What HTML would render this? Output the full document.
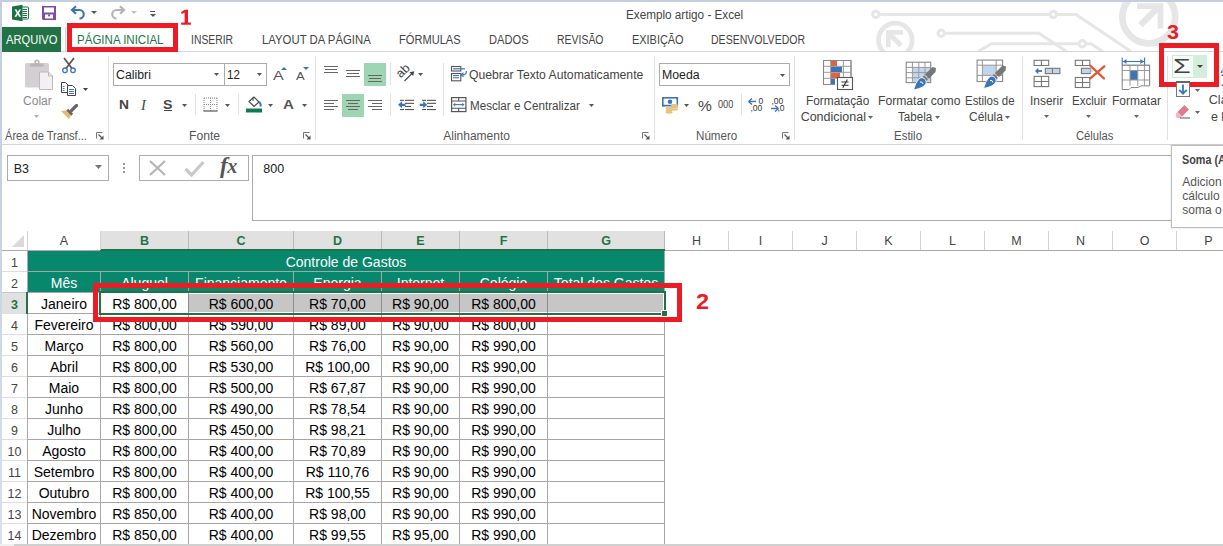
<!DOCTYPE html>
<html><head><meta charset="utf-8"><style>
html,body{margin:0;padding:0;}
body{width:1223px;height:546px;overflow:hidden;position:relative;background:#fff;font-family:"Liberation Sans", sans-serif;}
</style></head><body>
<div style="position:absolute;left:101px;top:231px;width:563px;height:18px;background:#e1e1e1;"></div>
<div style="position:absolute;left:100px;top:249px;width:565px;height:2px;background:#217346;"></div>
<div style="position:absolute;left:2px;top:250px;width:98px;height:1px;background:#ababab;"></div>
<div style="position:absolute;left:665px;top:250px;width:558px;height:1px;background:#ababab;"></div>
<div style="position:absolute;left:27px;top:231px;width:1px;height:19px;background:#d4d4d4;"></div>
<div style="position:absolute;left:100px;top:231px;width:1px;height:19px;background:#d4d4d4;"></div>
<div style="position:absolute;left:188px;top:231px;width:1px;height:18px;background:#b8b8b8;"></div>
<div style="position:absolute;left:293px;top:231px;width:1px;height:18px;background:#b8b8b8;"></div>
<div style="position:absolute;left:381px;top:231px;width:1px;height:18px;background:#b8b8b8;"></div>
<div style="position:absolute;left:459px;top:231px;width:1px;height:18px;background:#b8b8b8;"></div>
<div style="position:absolute;left:547px;top:231px;width:1px;height:18px;background:#b8b8b8;"></div>
<div style="position:absolute;left:664px;top:231px;width:1px;height:18px;background:#b8b8b8;"></div>
<div style="position:absolute;left:728px;top:231px;width:1px;height:19px;background:#d4d4d4;"></div>
<div style="position:absolute;left:792px;top:231px;width:1px;height:19px;background:#d4d4d4;"></div>
<div style="position:absolute;left:856px;top:231px;width:1px;height:19px;background:#d4d4d4;"></div>
<div style="position:absolute;left:920px;top:231px;width:1px;height:19px;background:#d4d4d4;"></div>
<div style="position:absolute;left:984px;top:231px;width:1px;height:19px;background:#d4d4d4;"></div>
<div style="position:absolute;left:1048px;top:231px;width:1px;height:19px;background:#d4d4d4;"></div>
<div style="position:absolute;left:1112px;top:231px;width:1px;height:19px;background:#d4d4d4;"></div>
<div style="position:absolute;left:1176px;top:231px;width:1px;height:19px;background:#d4d4d4;"></div>
<div style="position:absolute;left:1240px;top:231px;width:1px;height:19px;background:#d4d4d4;"></div>
<svg style="position:absolute;left:12px;top:235px;" width="13" height="12" viewBox="0 0 13 12"><path d="M12 0V12H0Z" fill="#dadada"/></svg>
<div style="position:absolute;left:59.83px;top:235px;font-size:12.5px;line-height:12.5px;color:#444;font-weight:400;white-space:pre;">A</div>
<div style="position:absolute;left:139.98px;top:235px;font-size:12.5px;line-height:12.5px;color:#217346;font-weight:700;white-space:pre;">B</div>
<div style="position:absolute;left:236.48px;top:235px;font-size:12.5px;line-height:12.5px;color:#217346;font-weight:700;white-space:pre;">C</div>
<div style="position:absolute;left:332.98px;top:235px;font-size:12.5px;line-height:12.5px;color:#217346;font-weight:700;white-space:pre;">D</div>
<div style="position:absolute;left:416.33px;top:235px;font-size:12.5px;line-height:12.5px;color:#217346;font-weight:700;white-space:pre;">E</div>
<div style="position:absolute;left:499.68px;top:235px;font-size:12.5px;line-height:12.5px;color:#217346;font-weight:700;white-space:pre;">F</div>
<div style="position:absolute;left:601.13px;top:235px;font-size:12.5px;line-height:12.5px;color:#217346;font-weight:700;white-space:pre;">G</div>
<div style="position:absolute;left:691.98px;top:235px;font-size:12.5px;line-height:12.5px;color:#444;font-weight:400;white-space:pre;">H</div>
<div style="position:absolute;left:758.76px;top:235px;font-size:12.5px;line-height:12.5px;color:#444;font-weight:400;white-space:pre;">I</div>
<div style="position:absolute;left:821.38px;top:235px;font-size:12.5px;line-height:12.5px;color:#444;font-weight:400;white-space:pre;">J</div>
<div style="position:absolute;left:884.33px;top:235px;font-size:12.5px;line-height:12.5px;color:#444;font-weight:400;white-space:pre;">K</div>
<div style="position:absolute;left:949.02px;top:235px;font-size:12.5px;line-height:12.5px;color:#444;font-weight:400;white-space:pre;">L</div>
<div style="position:absolute;left:1011.29px;top:235px;font-size:12.5px;line-height:12.5px;color:#444;font-weight:400;white-space:pre;">M</div>
<div style="position:absolute;left:1075.98px;top:235px;font-size:12.5px;line-height:12.5px;color:#444;font-weight:400;white-space:pre;">N</div>
<div style="position:absolute;left:1139.63px;top:235px;font-size:12.5px;line-height:12.5px;color:#444;font-weight:400;white-space:pre;">O</div>
<div style="position:absolute;left:1204.33px;top:235px;font-size:12.5px;line-height:12.5px;color:#444;font-weight:400;white-space:pre;">P</div>
<div style="position:absolute;left:27px;top:251px;width:1px;height:295px;background:#ababab;"></div>
<div style="position:absolute;left:2px;top:271px;width:25px;height:1px;background:#dedede;"></div>
<div style="position:absolute;left:2px;top:292px;width:25px;height:1px;background:#dedede;"></div>
<div style="position:absolute;left:2px;top:313px;width:25px;height:1px;background:#dedede;"></div>
<div style="position:absolute;left:2px;top:334px;width:25px;height:1px;background:#dedede;"></div>
<div style="position:absolute;left:2px;top:355px;width:25px;height:1px;background:#dedede;"></div>
<div style="position:absolute;left:2px;top:376px;width:25px;height:1px;background:#dedede;"></div>
<div style="position:absolute;left:2px;top:397px;width:25px;height:1px;background:#dedede;"></div>
<div style="position:absolute;left:2px;top:418px;width:25px;height:1px;background:#dedede;"></div>
<div style="position:absolute;left:2px;top:439px;width:25px;height:1px;background:#dedede;"></div>
<div style="position:absolute;left:2px;top:460px;width:25px;height:1px;background:#dedede;"></div>
<div style="position:absolute;left:2px;top:481px;width:25px;height:1px;background:#dedede;"></div>
<div style="position:absolute;left:2px;top:502px;width:25px;height:1px;background:#dedede;"></div>
<div style="position:absolute;left:2px;top:523px;width:25px;height:1px;background:#dedede;"></div>
<div style="position:absolute;left:2px;top:293px;width:24px;height:20px;background:#e1e1e1;"></div>
<div style="position:absolute;left:2px;top:292px;width:25px;height:1px;background:#c8c8c8;"></div>
<div style="position:absolute;left:26px;top:292px;width:2px;height:22px;background:#217346;"></div>
<div style="position:absolute;left:11.02px;top:257px;font-size:12.5px;line-height:12.5px;color:#444;font-weight:400;white-space:pre;">1</div>
<div style="position:absolute;left:11.02px;top:278px;font-size:12.5px;line-height:12.5px;color:#444;font-weight:400;white-space:pre;">2</div>
<div style="position:absolute;left:11.02px;top:299px;font-size:12.5px;line-height:12.5px;color:#217346;font-weight:700;white-space:pre;">3</div>
<div style="position:absolute;left:11.02px;top:320px;font-size:12.5px;line-height:12.5px;color:#444;font-weight:400;white-space:pre;">4</div>
<div style="position:absolute;left:11.02px;top:341px;font-size:12.5px;line-height:12.5px;color:#444;font-weight:400;white-space:pre;">5</div>
<div style="position:absolute;left:11.02px;top:362px;font-size:12.5px;line-height:12.5px;color:#444;font-weight:400;white-space:pre;">6</div>
<div style="position:absolute;left:11.02px;top:383px;font-size:12.5px;line-height:12.5px;color:#444;font-weight:400;white-space:pre;">7</div>
<div style="position:absolute;left:11.02px;top:404px;font-size:12.5px;line-height:12.5px;color:#444;font-weight:400;white-space:pre;">8</div>
<div style="position:absolute;left:11.02px;top:425px;font-size:12.5px;line-height:12.5px;color:#444;font-weight:400;white-space:pre;">9</div>
<div style="position:absolute;left:7.55px;top:446px;font-size:12.5px;line-height:12.5px;color:#444;font-weight:400;white-space:pre;">10</div>
<div style="position:absolute;left:8.01px;top:467px;font-size:12.5px;line-height:12.5px;color:#444;font-weight:400;white-space:pre;">11</div>
<div style="position:absolute;left:7.55px;top:488px;font-size:12.5px;line-height:12.5px;color:#444;font-weight:400;white-space:pre;">12</div>
<div style="position:absolute;left:7.55px;top:509px;font-size:12.5px;line-height:12.5px;color:#444;font-weight:400;white-space:pre;">13</div>
<div style="position:absolute;left:7.55px;top:530px;font-size:12.5px;line-height:12.5px;color:#444;font-weight:400;white-space:pre;">14</div>
<div style="position:absolute;left:28px;top:251px;width:636px;height:41px;background:#07876b;"></div>
<div style="position:absolute;left:189px;top:294px;width:474px;height:18px;background:#c6c6c6;"></div>
<div style="position:absolute;left:28px;top:271px;width:637px;height:1px;background:#a9a5a5;"></div>
<div style="position:absolute;left:28px;top:292px;width:637px;height:1px;background:#a9a5a5;"></div>
<div style="position:absolute;left:28px;top:313px;width:637px;height:1px;background:#a9a5a5;"></div>
<div style="position:absolute;left:28px;top:334px;width:637px;height:1px;background:#a9a5a5;"></div>
<div style="position:absolute;left:28px;top:355px;width:637px;height:1px;background:#a9a5a5;"></div>
<div style="position:absolute;left:28px;top:376px;width:637px;height:1px;background:#a9a5a5;"></div>
<div style="position:absolute;left:28px;top:397px;width:637px;height:1px;background:#a9a5a5;"></div>
<div style="position:absolute;left:28px;top:418px;width:637px;height:1px;background:#a9a5a5;"></div>
<div style="position:absolute;left:28px;top:439px;width:637px;height:1px;background:#a9a5a5;"></div>
<div style="position:absolute;left:28px;top:460px;width:637px;height:1px;background:#a9a5a5;"></div>
<div style="position:absolute;left:28px;top:481px;width:637px;height:1px;background:#a9a5a5;"></div>
<div style="position:absolute;left:28px;top:502px;width:637px;height:1px;background:#a9a5a5;"></div>
<div style="position:absolute;left:28px;top:523px;width:637px;height:1px;background:#a9a5a5;"></div>
<div style="position:absolute;left:100px;top:272px;width:1px;height:274px;background:#a9a5a5;"></div>
<div style="position:absolute;left:188px;top:272px;width:1px;height:274px;background:#a9a5a5;"></div>
<div style="position:absolute;left:293px;top:272px;width:1px;height:274px;background:#a9a5a5;"></div>
<div style="position:absolute;left:381px;top:272px;width:1px;height:274px;background:#a9a5a5;"></div>
<div style="position:absolute;left:459px;top:272px;width:1px;height:274px;background:#a9a5a5;"></div>
<div style="position:absolute;left:547px;top:272px;width:1px;height:274px;background:#a9a5a5;"></div>
<div style="position:absolute;left:664px;top:272px;width:1px;height:274px;background:#a9a5a5;"></div>
<div style="position:absolute;left:664px;top:251px;width:1px;height:295px;background:#a9a5a5;"></div>
<div style="position:absolute;left:285.69px;top:255px;font-size:14px;line-height:14px;color:#fff;font-weight:400;white-space:pre;">Controle de Gastos</div>
<div style="position:absolute;left:50.77px;top:276px;font-size:14px;line-height:14px;color:#fff;font-weight:400;white-space:pre;">Mês</div>
<div style="position:absolute;left:121.15px;top:276px;font-size:14px;line-height:14px;color:#fff;font-weight:400;white-space:pre;">Aluguel</div>
<div style="position:absolute;left:195.09px;top:276px;font-size:14px;line-height:14px;color:#fff;font-weight:400;white-space:pre;">Financiamento</div>
<div style="position:absolute;left:313.37px;top:276px;font-size:14px;line-height:14px;color:#fff;font-weight:400;white-space:pre;">Energia</div>
<div style="position:absolute;left:396.76px;top:276px;font-size:14px;line-height:14px;color:#fff;font-weight:400;white-space:pre;">Internet</div>
<div style="position:absolute;left:479.76px;top:276px;font-size:14px;line-height:14px;color:#fff;font-weight:400;white-space:pre;">Colégio</div>
<div style="position:absolute;left:553.86px;top:276px;font-size:14px;line-height:14px;color:#fff;font-weight:400;white-space:pre;">Total dos Gastos</div>
<div style="position:absolute;left:41.04px;top:297px;font-size:14px;line-height:14px;color:#000;font-weight:400;white-space:pre;">Janeiro</div>
<div style="position:absolute;left:112.20px;top:297px;font-size:14px;line-height:14px;color:#000;font-weight:400;white-space:pre;">R$ 800,00</div>
<div style="position:absolute;left:208.70px;top:297px;font-size:14px;line-height:14px;color:#000;font-weight:400;white-space:pre;">R$ 600,00</div>
<div style="position:absolute;left:309.09px;top:297px;font-size:14px;line-height:14px;color:#000;font-weight:400;white-space:pre;">R$ 70,00</div>
<div style="position:absolute;left:392.09px;top:297px;font-size:14px;line-height:14px;color:#000;font-weight:400;white-space:pre;">R$ 90,00</div>
<div style="position:absolute;left:471.20px;top:297px;font-size:14px;line-height:14px;color:#000;font-weight:400;white-space:pre;">R$ 800,00</div>
<div style="position:absolute;left:34.43px;top:318px;font-size:14px;line-height:14px;color:#000;font-weight:400;white-space:pre;">Fevereiro</div>
<div style="position:absolute;left:112.20px;top:318px;font-size:14px;line-height:14px;color:#000;font-weight:400;white-space:pre;">R$ 800,00</div>
<div style="position:absolute;left:208.70px;top:318px;font-size:14px;line-height:14px;color:#000;font-weight:400;white-space:pre;">R$ 590,00</div>
<div style="position:absolute;left:309.09px;top:318px;font-size:14px;line-height:14px;color:#000;font-weight:400;white-space:pre;">R$ 89,00</div>
<div style="position:absolute;left:392.09px;top:318px;font-size:14px;line-height:14px;color:#000;font-weight:400;white-space:pre;">R$ 90,00</div>
<div style="position:absolute;left:471.20px;top:318px;font-size:14px;line-height:14px;color:#000;font-weight:400;white-space:pre;">R$ 800,00</div>
<div style="position:absolute;left:44.55px;top:339px;font-size:14px;line-height:14px;color:#000;font-weight:400;white-space:pre;">Março</div>
<div style="position:absolute;left:112.20px;top:339px;font-size:14px;line-height:14px;color:#000;font-weight:400;white-space:pre;">R$ 800,00</div>
<div style="position:absolute;left:208.70px;top:339px;font-size:14px;line-height:14px;color:#000;font-weight:400;white-space:pre;">R$ 560,00</div>
<div style="position:absolute;left:309.09px;top:339px;font-size:14px;line-height:14px;color:#000;font-weight:400;white-space:pre;">R$ 76,00</div>
<div style="position:absolute;left:392.09px;top:339px;font-size:14px;line-height:14px;color:#000;font-weight:400;white-space:pre;">R$ 90,00</div>
<div style="position:absolute;left:471.20px;top:339px;font-size:14px;line-height:14px;color:#000;font-weight:400;white-space:pre;">R$ 990,00</div>
<div style="position:absolute;left:49.99px;top:360px;font-size:14px;line-height:14px;color:#000;font-weight:400;white-space:pre;">Abril</div>
<div style="position:absolute;left:112.20px;top:360px;font-size:14px;line-height:14px;color:#000;font-weight:400;white-space:pre;">R$ 800,00</div>
<div style="position:absolute;left:208.70px;top:360px;font-size:14px;line-height:14px;color:#000;font-weight:400;white-space:pre;">R$ 530,00</div>
<div style="position:absolute;left:305.20px;top:360px;font-size:14px;line-height:14px;color:#000;font-weight:400;white-space:pre;">R$ 100,00</div>
<div style="position:absolute;left:392.09px;top:360px;font-size:14px;line-height:14px;color:#000;font-weight:400;white-space:pre;">R$ 90,00</div>
<div style="position:absolute;left:471.20px;top:360px;font-size:14px;line-height:14px;color:#000;font-weight:400;white-space:pre;">R$ 990,00</div>
<div style="position:absolute;left:48.82px;top:381px;font-size:14px;line-height:14px;color:#000;font-weight:400;white-space:pre;">Maio</div>
<div style="position:absolute;left:112.20px;top:381px;font-size:14px;line-height:14px;color:#000;font-weight:400;white-space:pre;">R$ 800,00</div>
<div style="position:absolute;left:208.70px;top:381px;font-size:14px;line-height:14px;color:#000;font-weight:400;white-space:pre;">R$ 500,00</div>
<div style="position:absolute;left:309.09px;top:381px;font-size:14px;line-height:14px;color:#000;font-weight:400;white-space:pre;">R$ 67,87</div>
<div style="position:absolute;left:392.09px;top:381px;font-size:14px;line-height:14px;color:#000;font-weight:400;white-space:pre;">R$ 90,00</div>
<div style="position:absolute;left:471.20px;top:381px;font-size:14px;line-height:14px;color:#000;font-weight:400;white-space:pre;">R$ 990,00</div>
<div style="position:absolute;left:44.92px;top:402px;font-size:14px;line-height:14px;color:#000;font-weight:400;white-space:pre;">Junho</div>
<div style="position:absolute;left:112.20px;top:402px;font-size:14px;line-height:14px;color:#000;font-weight:400;white-space:pre;">R$ 800,00</div>
<div style="position:absolute;left:208.70px;top:402px;font-size:14px;line-height:14px;color:#000;font-weight:400;white-space:pre;">R$ 490,00</div>
<div style="position:absolute;left:309.09px;top:402px;font-size:14px;line-height:14px;color:#000;font-weight:400;white-space:pre;">R$ 78,54</div>
<div style="position:absolute;left:392.09px;top:402px;font-size:14px;line-height:14px;color:#000;font-weight:400;white-space:pre;">R$ 90,00</div>
<div style="position:absolute;left:471.20px;top:402px;font-size:14px;line-height:14px;color:#000;font-weight:400;white-space:pre;">R$ 990,00</div>
<div style="position:absolute;left:47.27px;top:423px;font-size:14px;line-height:14px;color:#000;font-weight:400;white-space:pre;">Julho</div>
<div style="position:absolute;left:112.20px;top:423px;font-size:14px;line-height:14px;color:#000;font-weight:400;white-space:pre;">R$ 800,00</div>
<div style="position:absolute;left:208.70px;top:423px;font-size:14px;line-height:14px;color:#000;font-weight:400;white-space:pre;">R$ 450,00</div>
<div style="position:absolute;left:309.09px;top:423px;font-size:14px;line-height:14px;color:#000;font-weight:400;white-space:pre;">R$ 98,21</div>
<div style="position:absolute;left:392.09px;top:423px;font-size:14px;line-height:14px;color:#000;font-weight:400;white-space:pre;">R$ 90,00</div>
<div style="position:absolute;left:471.20px;top:423px;font-size:14px;line-height:14px;color:#000;font-weight:400;white-space:pre;">R$ 990,00</div>
<div style="position:absolute;left:42.20px;top:444px;font-size:14px;line-height:14px;color:#000;font-weight:400;white-space:pre;">Agosto</div>
<div style="position:absolute;left:112.20px;top:444px;font-size:14px;line-height:14px;color:#000;font-weight:400;white-space:pre;">R$ 800,00</div>
<div style="position:absolute;left:208.70px;top:444px;font-size:14px;line-height:14px;color:#000;font-weight:400;white-space:pre;">R$ 400,00</div>
<div style="position:absolute;left:309.09px;top:444px;font-size:14px;line-height:14px;color:#000;font-weight:400;white-space:pre;">R$ 70,89</div>
<div style="position:absolute;left:392.09px;top:444px;font-size:14px;line-height:14px;color:#000;font-weight:400;white-space:pre;">R$ 90,00</div>
<div style="position:absolute;left:471.20px;top:444px;font-size:14px;line-height:14px;color:#000;font-weight:400;white-space:pre;">R$ 990,00</div>
<div style="position:absolute;left:33.65px;top:465px;font-size:14px;line-height:14px;color:#000;font-weight:400;white-space:pre;">Setembro</div>
<div style="position:absolute;left:112.20px;top:465px;font-size:14px;line-height:14px;color:#000;font-weight:400;white-space:pre;">R$ 800,00</div>
<div style="position:absolute;left:208.70px;top:465px;font-size:14px;line-height:14px;color:#000;font-weight:400;white-space:pre;">R$ 400,00</div>
<div style="position:absolute;left:305.71px;top:465px;font-size:14px;line-height:14px;color:#000;font-weight:400;white-space:pre;">R$ 110,76</div>
<div style="position:absolute;left:392.09px;top:465px;font-size:14px;line-height:14px;color:#000;font-weight:400;white-space:pre;">R$ 90,00</div>
<div style="position:absolute;left:471.20px;top:465px;font-size:14px;line-height:14px;color:#000;font-weight:400;white-space:pre;">R$ 990,00</div>
<div style="position:absolute;left:38.70px;top:486px;font-size:14px;line-height:14px;color:#000;font-weight:400;white-space:pre;">Outubro</div>
<div style="position:absolute;left:112.20px;top:486px;font-size:14px;line-height:14px;color:#000;font-weight:400;white-space:pre;">R$ 800,00</div>
<div style="position:absolute;left:208.70px;top:486px;font-size:14px;line-height:14px;color:#000;font-weight:400;white-space:pre;">R$ 400,00</div>
<div style="position:absolute;left:305.20px;top:486px;font-size:14px;line-height:14px;color:#000;font-weight:400;white-space:pre;">R$ 100,55</div>
<div style="position:absolute;left:392.09px;top:486px;font-size:14px;line-height:14px;color:#000;font-weight:400;white-space:pre;">R$ 90,00</div>
<div style="position:absolute;left:471.20px;top:486px;font-size:14px;line-height:14px;color:#000;font-weight:400;white-space:pre;">R$ 990,00</div>
<div style="position:absolute;left:31.70px;top:507px;font-size:14px;line-height:14px;color:#000;font-weight:400;white-space:pre;">Novembro</div>
<div style="position:absolute;left:112.20px;top:507px;font-size:14px;line-height:14px;color:#000;font-weight:400;white-space:pre;">R$ 850,00</div>
<div style="position:absolute;left:208.70px;top:507px;font-size:14px;line-height:14px;color:#000;font-weight:400;white-space:pre;">R$ 400,00</div>
<div style="position:absolute;left:309.09px;top:507px;font-size:14px;line-height:14px;color:#000;font-weight:400;white-space:pre;">R$ 98,00</div>
<div style="position:absolute;left:392.09px;top:507px;font-size:14px;line-height:14px;color:#000;font-weight:400;white-space:pre;">R$ 90,00</div>
<div style="position:absolute;left:471.20px;top:507px;font-size:14px;line-height:14px;color:#000;font-weight:400;white-space:pre;">R$ 990,00</div>
<div style="position:absolute;left:31.70px;top:528px;font-size:14px;line-height:14px;color:#000;font-weight:400;white-space:pre;">Dezembro</div>
<div style="position:absolute;left:112.20px;top:528px;font-size:14px;line-height:14px;color:#000;font-weight:400;white-space:pre;">R$ 850,00</div>
<div style="position:absolute;left:208.70px;top:528px;font-size:14px;line-height:14px;color:#000;font-weight:400;white-space:pre;">R$ 400,00</div>
<div style="position:absolute;left:309.09px;top:528px;font-size:14px;line-height:14px;color:#000;font-weight:400;white-space:pre;">R$ 99,55</div>
<div style="position:absolute;left:392.09px;top:528px;font-size:14px;line-height:14px;color:#000;font-weight:400;white-space:pre;">R$ 95,00</div>
<div style="position:absolute;left:471.20px;top:528px;font-size:14px;line-height:14px;color:#000;font-weight:400;white-space:pre;">R$ 990,00</div>
<div style="position:absolute;left:188px;top:294px;width:1px;height:18px;background:#8c8c8c;"></div>
<div style="position:absolute;left:293px;top:294px;width:1px;height:18px;background:#8c8c8c;"></div>
<div style="position:absolute;left:381px;top:294px;width:1px;height:18px;background:#8c8c8c;"></div>
<div style="position:absolute;left:459px;top:294px;width:1px;height:18px;background:#8c8c8c;"></div>
<div style="position:absolute;left:547px;top:294px;width:1px;height:18px;background:#8c8c8c;"></div>
<div style="position:absolute;left:99px;top:291px;width:567px;height:24px;box-sizing:border-box;border:2px solid #217346;background:transparent;"></div>
<div style="position:absolute;left:661px;top:310px;width:7px;height:7px;background:#fff;"></div>
<div style="position:absolute;left:662px;top:311px;width:5px;height:5px;background:#217346;"></div>
<div style="position:absolute;left:0px;top:544px;width:14px;height:2px;background:#f0f0f0;"></div>
<div style="position:absolute;left:14px;top:544px;width:1209px;height:2px;background:#d0d0d0;"></div>
<div style="position:absolute;left:2px;top:144px;width:1221px;height:1px;background:#d5d5d5;"></div>
<div style="position:absolute;left:7px;top:155px;width:102px;height:26px;box-sizing:border-box;border:1px solid #ababab;background:#fff;"></div>
<div style="position:absolute;left:13.75px;top:163px;font-size:12.5px;line-height:12.5px;color:#222;font-weight:400;white-space:pre;">B3</div>
<svg style="position:absolute;left:95.0px;top:165px" width="7" height="4" viewBox="0 0 7 4"><path d="M0 0H7L3.5 4Z" fill="#777"/></svg>
<div style="position:absolute;left:123px;top:163px;width:2px;height:2px;background:#999;"></div>
<div style="position:absolute;left:123px;top:167px;width:2px;height:2px;background:#999;"></div>
<div style="position:absolute;left:123px;top:171px;width:2px;height:2px;background:#999;"></div>
<div style="position:absolute;left:139px;top:155px;width:110px;height:26px;box-sizing:border-box;border:1px solid #ababab;background:#fff;"></div>
<svg style="position:absolute;left:148px;top:160px;" width="19" height="17" viewBox="0 0 19 17"><path d="M2 1L17 15M17 1L2 15" stroke="#b5b5b5" stroke-width="2.2" fill="none"/></svg>
<svg style="position:absolute;left:184px;top:160px;" width="21" height="17" viewBox="0 0 21 17"><path d="M1.5 9L7.5 15L19.5 2" stroke="#c8c8c8" stroke-width="3.2" fill="none"/></svg>
<div style="position:absolute;left:220px;top:154px;font-family:'Liberation Serif',serif;font-style:italic;font-weight:700;font-size:23px;line-height:24px;color:#555;letter-spacing:-0.5px">f<span style="font-size:20px">x</span></div>
<div style="position:absolute;left:252px;top:155px;width:971px;height:66px;box-sizing:border-box;border:1px solid #ababab;background:#fff;"></div>
<div style="position:absolute;left:263.25px;top:163px;font-size:12.5px;line-height:12.5px;color:#222;font-weight:400;white-space:pre;">800</div>
<div style="position:absolute;left:1171px;top:145px;width:60px;height:83px;box-sizing:border-box;border:1px solid #bdbdbd;background:#fff;box-shadow:0 0 2px rgba(0,0,0,0.15);"></div>
<div style="position:absolute;left:1182.35px;top:154px;font-size:12px;line-height:12px;color:#444;font-weight:700;white-space:pre;transform:scaleX(0.9000);transform-origin:0 0;">Soma (A</div>
<div style="position:absolute;left:1182.28px;top:176px;font-size:12px;line-height:12px;color:#555;font-weight:400;white-space:pre;">Adicion</div>
<div style="position:absolute;left:1182.28px;top:190px;font-size:12px;line-height:12px;color:#555;font-weight:400;white-space:pre;">cálculo</div>
<div style="position:absolute;left:1182.28px;top:204px;font-size:12px;line-height:12px;color:#555;font-weight:400;white-space:pre;">soma o</div>
<div style="position:absolute;left:0px;top:0px;width:1223px;height:2px;background:#c4cedf;"></div>
<div style="position:absolute;left:0px;top:0px;width:2px;height:544px;background:linear-gradient(#c4cedf, #c8d2e2 40%, #d8e0ec);"></div>
<svg style="position:absolute;left:2px;top:2px;" width="1221" height="49" viewBox="0 0 1221 49"><g transform="translate(-2 -2)" fill="none" stroke="#e6e6e6" stroke-width="3">
<path d="M879 14.4H1050M1056.5 14.4H1076L1131 51.5"/>
<circle cx="875.8" cy="14.4" r="3.2"/>
<circle cx="1053.3" cy="14.4" r="3.2"/>
<path d="M944.5 33.3H1039L1066.5 51.5"/>
<circle cx="941.2" cy="33.3" r="3.2"/>
<path d="M978 51.5L991.5 43.8H1079M1085.7 43.8H1091L1103 51.5"/>
<circle cx="1082.4" cy="43.8" r="3.2"/>
<circle cx="895.3" cy="40" r="16.8" stroke-width="4.7"/>
<path d="M901 45.5L889.5 34" stroke-width="5"/>
<path d="M888.3 47.2V32.4H903" stroke-width="4.6"/>
<circle cx="1148.8" cy="16.9" r="26.4" stroke-width="6.7"/>
<path d="M1140.5 25L1157.5 8" stroke-width="6.5"/>
<path d="M1137 6.1H1160.5V28.6" stroke-width="5.7"/>
</g></svg>
<div style="position:absolute;left:625.60px;top:9px;font-size:12.5px;line-height:12.5px;color:#444;font-weight:400;white-space:pre;transform:scaleX(0.9371);transform-origin:0 0;">Exemplo artigo - Excel</div>
<div style="position:absolute;left:2px;top:27px;width:59px;height:25px;background:#217346;"></div>
<div style="position:absolute;left:6.33px;top:34px;font-size:12.5px;line-height:12.5px;color:#fff;font-weight:400;white-space:pre;transform:scaleX(0.8932);transform-origin:0 0;">ARQUIVO</div>
<div style="position:absolute;left:61px;top:51px;width:1162px;height:1px;background:#d5d5d5;"></div>
<div style="position:absolute;left:65px;top:27px;width:1px;height:25px;background:#d5d5d5;"></div>
<div style="position:absolute;left:77.31px;top:34px;font-size:12.5px;line-height:12.5px;color:#217346;font-weight:400;white-space:pre;transform:scaleX(0.9224);transform-origin:0 0;">PÁGINA INICIAL</div>
<div style="position:absolute;left:191.38px;top:34px;font-size:12.5px;line-height:12.5px;color:#444;font-weight:400;white-space:pre;transform:scaleX(0.8303);transform-origin:0 0;">INSERIR</div>
<div style="position:absolute;left:261.82px;top:34px;font-size:12.5px;line-height:12.5px;color:#444;font-weight:400;white-space:pre;transform:scaleX(0.9080);transform-origin:0 0;">LAYOUT DA PÁGINA</div>
<div style="position:absolute;left:398.73px;top:34px;font-size:12.5px;line-height:12.5px;color:#444;font-weight:400;white-space:pre;transform:scaleX(0.8869);transform-origin:0 0;">FÓRMULAS</div>
<div style="position:absolute;left:489.03px;top:34px;font-size:12.5px;line-height:12.5px;color:#444;font-weight:400;white-space:pre;transform:scaleX(0.8908);transform-origin:0 0;">DADOS</div>
<div style="position:absolute;left:556.67px;top:34px;font-size:12.5px;line-height:12.5px;color:#444;font-weight:400;white-space:pre;transform:scaleX(0.8367);transform-origin:0 0;">REVISÃO</div>
<div style="position:absolute;left:631.64px;top:34px;font-size:12.5px;line-height:12.5px;color:#444;font-weight:400;white-space:pre;transform:scaleX(0.8739);transform-origin:0 0;">EXIBIÇÃO</div>
<div style="position:absolute;left:711.47px;top:34px;font-size:12.5px;line-height:12.5px;color:#444;font-weight:400;white-space:pre;transform:scaleX(0.8431);transform-origin:0 0;">DESENVOLVEDOR</div>
<div style="position:absolute;left:5.34px;top:130px;font-size:12px;line-height:12px;color:#555;font-weight:400;white-space:pre;transform:scaleX(0.9236);transform-origin:0 0;">Área de Transf...</div>
<div style="position:absolute;left:188.67px;top:130px;font-size:12px;line-height:12px;color:#555;font-weight:400;white-space:pre;transform:scaleX(1.0115);transform-origin:0 0;">Fonte</div>
<div style="position:absolute;left:443.28px;top:130px;font-size:12px;line-height:12px;color:#555;font-weight:400;white-space:pre;">Alinhamento</div>
<div style="position:absolute;left:695.90px;top:130px;font-size:12px;line-height:12px;color:#555;font-weight:400;white-space:pre;transform:scaleX(0.9684);transform-origin:0 0;">Número</div>
<div style="position:absolute;left:893.71px;top:130px;font-size:12px;line-height:12px;color:#555;font-weight:400;white-space:pre;transform:scaleX(0.9556);transform-origin:0 0;">Estilo</div>
<div style="position:absolute;left:1075.63px;top:130px;font-size:12px;line-height:12px;color:#555;font-weight:400;white-space:pre;transform:scaleX(0.9353);transform-origin:0 0;">Células</div>
<div style="position:absolute;left:108px;top:56px;width:1px;height:84px;background:#e1e1e1;"></div>
<div style="position:absolute;left:315px;top:56px;width:1px;height:84px;background:#e1e1e1;"></div>
<div style="position:absolute;left:654px;top:56px;width:1px;height:84px;background:#e1e1e1;"></div>
<div style="position:absolute;left:794px;top:56px;width:1px;height:84px;background:#e1e1e1;"></div>
<div style="position:absolute;left:1022px;top:56px;width:1px;height:84px;background:#e1e1e1;"></div>
<div style="position:absolute;left:1167px;top:56px;width:1px;height:84px;background:#e1e1e1;"></div>
<div style="position:absolute;left:67px;top:23px;width:111px;height:29px;box-sizing:border-box;border:5px solid #ed1c24;background:transparent;"></div>
<div style="position:absolute;left:93px;top:283px;width:589px;height:39px;box-sizing:border-box;border:5px solid #ed1c24;background:transparent;"></div>
<div style="position:absolute;left:1159px;top:43px;width:60px;height:44px;box-sizing:border-box;border:5px solid #ed1c24;background:transparent;"></div>
<svg style="position:absolute;left:180px;top:9px;" width="12" height="17" viewBox="0 0 12 17"><path d="M4.6 0.8H8V13.6H10.9V15.8H1.2V13.6H4.6V3.4L1.6 5L1 3.3Z" fill="#ed1c24"/></svg>
<div style="position:absolute;left:696.19px;top:291px;font-size:22px;line-height:22px;color:#ed1c24;font-weight:700;white-space:pre;transform:scaleX(1.0645);transform-origin:0 0;">2</div>
<div style="position:absolute;left:1166.70px;top:23px;font-size:19.5px;line-height:19.5px;color:#ed1c24;font-weight:700;white-space:pre;transform:scaleX(1.1087);transform-origin:0 0;">3</div>
<svg style="position:absolute;left:12px;top:4px;" width="17" height="18" viewBox="0 0 17 18">
<rect x="9" y="3" width="7.5" height="12" rx="0.8" fill="#fff" stroke="#1d7044" stroke-width="1"/>
<path d="M10.5 5.5h4.5M10.5 7.5h4.5M10.5 9.5h4.5M10.5 11.5h4.5M10.5 13.5h4.5" stroke="#1d7044" stroke-width="1.1"/>
<path d="M0 2.5L10.5 0.8V17.2L0 15.5Z" fill="#1d7044"/>
<path d="M2.6 5.5L4.6 5.5L5.9 8L7.2 5.5L9 5.5L6.9 9L9.1 12.7L7.1 12.7L5.8 10.3L4.5 12.7L2.5 12.7L4.7 9Z" fill="#fff"/>
</svg>
<svg style="position:absolute;left:42px;top:6px;" width="14" height="14" viewBox="0 0 14 14">
<path d="M0 0H14V14H1L0 13Z" fill="#7e4ca6"/>
<rect x="2" y="1.5" width="10" height="5" fill="#fff"/>
<rect x="3" y="8.5" width="8" height="4" fill="#fff"/>
<rect x="6" y="8.5" width="2" height="1.8" fill="#7e4ca6"/>
</svg>
<svg style="position:absolute;left:70px;top:5px;" width="16" height="15" viewBox="0 0 16 15">
<path d="M2 5H9.5A4.2 4.2 0 0 1 9.5 13.5" fill="none" stroke="#3d74b8" stroke-width="2.2"/>
<path d="M6 1.2L2 5L6 8.8" fill="none" stroke="#3d74b8" stroke-width="2.2"/>
</svg>
<svg style="position:absolute;left:90.5px;top:11px" width="6" height="3" viewBox="0 0 6 3"><path d="M0 0H6L3.0 3Z" fill="#555"/></svg>
<svg style="position:absolute;left:110px;top:5px;" width="16" height="15" viewBox="0 0 16 15">
<path d="M14 5H6.5A4.2 4.2 0 0 0 6.5 13.5" fill="none" stroke="#b4b4b4" stroke-width="2.2"/>
<path d="M10 1.2L14 5L10 8.8" fill="none" stroke="#b4b4b4" stroke-width="2.2"/>
</svg>
<svg style="position:absolute;left:130.5px;top:11px" width="6" height="3" viewBox="0 0 6 3"><path d="M0 0H6L3.0 3Z" fill="#c2c2c2"/></svg>
<div style="position:absolute;left:150px;top:11px;width:5px;height:1px;background:#555;"></div>
<svg style="position:absolute;left:149.5px;top:14px" width="6" height="3" viewBox="0 0 6 3"><path d="M0 0H6L3.0 3Z" fill="#555"/></svg>
<svg style="position:absolute;left:24px;top:58px;" width="30" height="33" viewBox="0 0 30 33">
<rect x="1" y="5" width="24" height="24.5" rx="1.5" fill="#d3d0d3"/>
<path d="M6 5.5H19.6V8.7H6Z" fill="#b9b5b9"/>
<circle cx="13" cy="4" r="2.6" fill="#b9b5b9"/>
<circle cx="13" cy="4" r="1" fill="#fff"/>
<path d="M15.5 14H24.5L28.5 18V31.5H15.5Z" fill="#f3eff3" stroke="#bcb8bc" stroke-width="1"/>
<path d="M24.5 14V18H28.5" fill="none" stroke="#bcb8bc" stroke-width="1"/>
</svg>
<div style="position:absolute;left:22.98px;top:95px;font-size:12.5px;line-height:12.5px;color:#8a8a8a;font-weight:400;white-space:pre;transform:scaleX(0.9640);transform-origin:0 0;">Colar</div>
<svg style="position:absolute;left:34.0px;top:115px" width="5" height="3" viewBox="0 0 5 3"><path d="M0 0H5L2.5 3Z" fill="#b0b0b0"/></svg>
<svg style="position:absolute;left:61px;top:57px;" width="16" height="17" viewBox="0 0 16 17">
<path d="M3 1L11 11.5M13 1L5 11.5" stroke="#555" stroke-width="1.7" fill="none"/>
<circle cx="4" cy="13.3" r="2.3" fill="#fff" stroke="#3d74b8" stroke-width="1.3"/>
<circle cx="12" cy="13.3" r="2.3" fill="#fff" stroke="#3d74b8" stroke-width="1.3"/>
</svg>
<svg style="position:absolute;left:60px;top:82px;" width="17" height="15" viewBox="0 0 17 15">
<path d="M1.5 0.5H5.5L8 3V10.5H1.5Z" fill="#fff" stroke="#444" stroke-width="1"/>
<path d="M2.8 4.5H4.5M2.8 6.5H4.5M2.8 8.5H4.5" stroke="#3d74b8" stroke-width="1"/>
<path d="M7.5 3.5H12.5L15.5 6.5V13.5H7.5Z" fill="#fff" stroke="#444" stroke-width="1"/>
<path d="M9 7.5H14M9 9.5H14M9 11.5H14" stroke="#3d74b8" stroke-width="1"/>
</svg>
<svg style="position:absolute;left:83.0px;top:88px" width="5" height="3" viewBox="0 0 5 3"><path d="M0 0H5L2.5 3Z" fill="#444"/></svg>
<svg style="position:absolute;left:60px;top:104px;" width="18" height="16" viewBox="0 0 18 16">
<path d="M16.5 1.5L11.5 6.5" stroke="#666" stroke-width="3.2" stroke-linecap="round"/>
<path d="M8.2 4.8L13.2 9.8L11.2 11.8L6.2 6.8Z" fill="#666"/>
<path d="M1 7L6 6.5L11 11.5L9 15Z" fill="#e3b866"/>
</svg>
<div style="position:absolute;left:113px;top:63px;width:112px;height:23px;box-sizing:border-box;border:1px solid #ababab;background:#fff;"></div>
<div style="position:absolute;left:224px;top:63px;width:43px;height:23px;box-sizing:border-box;border:1px solid #ababab;background:#fff;"></div>
<div style="position:absolute;left:115.66px;top:69px;font-size:12.5px;line-height:12.5px;color:#222;font-weight:400;white-space:pre;transform:scaleX(0.9848);transform-origin:0 0;">Calibri</div>
<svg style="position:absolute;left:214.0px;top:73px" width="5" height="3" viewBox="0 0 5 3"><path d="M0 0H5L2.5 3Z" fill="#555"/></svg>
<div style="position:absolute;left:226.60px;top:69px;font-size:12.5px;line-height:12.5px;color:#222;font-weight:400;white-space:pre;transform:scaleX(0.9276);transform-origin:0 0;">12</div>
<svg style="position:absolute;left:257.0px;top:73px" width="5" height="3" viewBox="0 0 5 3"><path d="M0 0H5L2.5 3Z" fill="#555"/></svg>
<div style="position:absolute;left:272.64px;top:69px;font-size:13px;line-height:13px;color:#555;font-weight:400;white-space:pre;transform:scaleX(1.2293);transform-origin:0 0;">A</div>
<svg style="position:absolute;left:281px;top:67px;" width="6" height="3" viewBox="0 0 6 3"><path d="M0 3H6L3 0Z" fill="#3d74b8"/></svg>
<div style="position:absolute;left:295.62px;top:71px;font-size:10.5px;line-height:10.5px;color:#555;font-weight:400;white-space:pre;transform:scaleX(1.2344);transform-origin:0 0;">A</div>
<svg style="position:absolute;left:303px;top:67px;" width="6" height="3" viewBox="0 0 6 3"><path d="M0 0H6L3 3Z" fill="#3d74b8"/></svg>
<div style="position:absolute;left:118.57px;top:98px;font-size:13px;line-height:13px;color:#444;font-weight:700;white-space:pre;transform:scaleX(1.0606);transform-origin:0 0;">N</div>
<div style="position:absolute;left:141px;top:98px;font-family:'Liberation Serif',serif;font-style:italic;font-size:14.5px;line-height:14px;color:#444;">I</div>
<div style="position:absolute;left:163.05px;top:98px;font-size:13px;line-height:13px;color:#444;font-weight:700;white-space:pre;transform:scaleX(1.0909);transform-origin:0 0;">S</div>
<div style="position:absolute;left:164px;top:110px;width:8px;height:1px;background:#444;"></div>
<svg style="position:absolute;left:182.0px;top:104px" width="5" height="3" viewBox="0 0 5 3"><path d="M0 0H5L2.5 3Z" fill="#555"/></svg>
<div style="position:absolute;left:195px;top:94px;width:1px;height:21px;background:#e1e1e1;"></div>
<svg style="position:absolute;left:203px;top:97px;" width="15" height="15" viewBox="0 0 15 15">
<path d="M1 1H14M1 7.5H14M1 1V14M7.5 1V14M14 1V14" stroke="#888" stroke-width="1" stroke-dasharray="1 1" fill="none"/>
<path d="M0.5 14H14.5" stroke="#555" stroke-width="1.2"/>
</svg>
<svg style="position:absolute;left:225.0px;top:104px" width="5" height="3" viewBox="0 0 5 3"><path d="M0 0H5L2.5 3Z" fill="#555"/></svg>
<div style="position:absolute;left:238px;top:94px;width:1px;height:21px;background:#e1e1e1;"></div>
<svg style="position:absolute;left:245px;top:96px;" width="18" height="17" viewBox="0 0 18 17">
<path d="M4 5.5L9 1L14 6L9 10.5Z" fill="#fff" stroke="#444" stroke-width="1.1"/>
<path d="M8 1.5V5" stroke="#444" stroke-width="1"/>
<path d="M14 6Q16.5 8 15.5 10.5" fill="none" stroke="#3d74b8" stroke-width="2"/>
<rect x="1" y="12.5" width="16" height="4" fill="#117a50"/>
</svg>
<svg style="position:absolute;left:268.0px;top:104px" width="5" height="3" viewBox="0 0 5 3"><path d="M0 0H5L2.5 3Z" fill="#555"/></svg>
<div style="position:absolute;left:282.69px;top:98px;font-size:13.5px;line-height:13.5px;color:#555;font-weight:700;white-space:pre;transform:scaleX(1.1200);transform-origin:0 0;">A</div>
<svg style="position:absolute;left:302.0px;top:104px" width="5" height="3" viewBox="0 0 5 3"><path d="M0 0H5L2.5 3Z" fill="#555"/></svg>
<div style="position:absolute;left:364px;top:63px;width:22px;height:23px;background:#9ed5b3;"></div>
<div style="position:absolute;left:342px;top:94px;width:22px;height:23px;background:#9ed5b3;"></div>
<div style="position:absolute;left:324px;top:66px;width:14px;height:1px;background:#666;"></div>
<div style="position:absolute;left:324px;top:72px;width:14px;height:1px;background:#666;"></div>
<div style="position:absolute;left:325px;top:69px;width:12px;height:1px;background:#666;"></div>
<div style="position:absolute;left:346px;top:70px;width:14px;height:1px;background:#666;"></div>
<div style="position:absolute;left:346px;top:76px;width:14px;height:1px;background:#666;"></div>
<div style="position:absolute;left:347px;top:73px;width:12px;height:1px;background:#666;"></div>
<div style="position:absolute;left:368px;top:75px;width:14px;height:1px;background:#666;"></div>
<div style="position:absolute;left:368px;top:81px;width:14px;height:1px;background:#666;"></div>
<div style="position:absolute;left:369px;top:78px;width:12px;height:1px;background:#666;"></div>
<div style="position:absolute;left:324px;top:100px;width:14px;height:1px;background:#666;"></div>
<div style="position:absolute;left:346px;top:100px;width:14px;height:1px;background:#666;"></div>
<div style="position:absolute;left:368px;top:100px;width:14px;height:1px;background:#666;"></div>
<div style="position:absolute;left:324px;top:106px;width:14px;height:1px;background:#666;"></div>
<div style="position:absolute;left:346px;top:106px;width:14px;height:1px;background:#666;"></div>
<div style="position:absolute;left:368px;top:106px;width:14px;height:1px;background:#666;"></div>
<div style="position:absolute;left:324px;top:103px;width:10px;height:1px;background:#666;"></div>
<div style="position:absolute;left:348px;top:103px;width:10px;height:1px;background:#666;"></div>
<div style="position:absolute;left:372px;top:103px;width:10px;height:1px;background:#666;"></div>
<div style="position:absolute;left:324px;top:109px;width:10px;height:1px;background:#666;"></div>
<div style="position:absolute;left:348px;top:109px;width:10px;height:1px;background:#666;"></div>
<div style="position:absolute;left:372px;top:109px;width:10px;height:1px;background:#666;"></div>
<div style="position:absolute;left:390px;top:63px;width:1px;height:22px;background:#e1e1e1;"></div>
<div style="position:absolute;left:390px;top:94px;width:1px;height:22px;background:#e1e1e1;"></div>
<div style="position:absolute;left:443px;top:63px;width:1px;height:53px;background:#e1e1e1;"></div>
<svg style="position:absolute;left:394px;top:62px;" width="24" height="22" viewBox="0 0 24 22">
<text x="0" y="0" transform="translate(6.8 16.6) rotate(-45)" font-family="Liberation Sans" font-size="12.5" fill="#444">ab</text>
<path d="M10.5 19L19 10.5" stroke="#444" stroke-width="1.1"/>
<path d="M20.3 9.2L15.4 10.3L19.2 14.1Z" fill="#444"/>
</svg>
<svg style="position:absolute;left:418.0px;top:73px" width="5" height="3" viewBox="0 0 5 3"><path d="M0 0H5L2.5 3Z" fill="#555"/></svg>
<svg style="position:absolute;left:396px;top:98px;" width="42" height="14" viewBox="0 0 42 14">
<rect x="4" y="1.8" width="4" height="1.1" fill="#555"/><rect x="9" y="1.8" width="9" height="1.1" fill="#555"/>
<rect x="9" y="4.8" width="9" height="1.1" fill="#555"/>
<rect x="9" y="7.9" width="6" height="1.1" fill="#555"/>
<rect x="4" y="11" width="4" height="1.1" fill="#555"/><rect x="9" y="11" width="9" height="1.1" fill="#555"/>
<path d="M2 6.8L6 3.3V5.7H9.5V7.9H6V10.3Z" fill="#3d74b8"/>
<rect x="26" y="1.8" width="4" height="1.1" fill="#555"/><rect x="31" y="1.8" width="9" height="1.1" fill="#555"/>
<rect x="31" y="4.8" width="9" height="1.1" fill="#555"/>
<rect x="31" y="7.9" width="6" height="1.1" fill="#555"/>
<rect x="26" y="11" width="4" height="1.1" fill="#555"/><rect x="31" y="11" width="9" height="1.1" fill="#555"/>
<path d="M31.2 6.8L27.2 3.3V5.7H23.7V7.9H27.2V10.3Z" fill="#3d74b8"/>
</svg>
<svg style="position:absolute;left:450px;top:65px;" width="18" height="17" viewBox="0 0 18 17">
<rect x="1.5" y="1.5" width="9.3" height="4.5" fill="#fff" stroke="#555" stroke-width="1.1"/>
<rect x="3" y="3.2" width="12" height="1.2" fill="#3d74b8"/>
<rect x="1.5" y="8.5" width="9.3" height="7.3" fill="#fff" stroke="#555" stroke-width="1.1"/>
<rect x="3" y="10" width="6" height="1.1" fill="#3d74b8"/>
<rect x="3" y="12.2" width="6" height="1.1" fill="#3d74b8"/>
<path d="M16.3 6V7.3Q16.3 9.8 12.5 9.8H11.5" fill="none" stroke="#3d74b8" stroke-width="1.2"/>
<path d="M11 9.8L13.5 7.8M11 9.8L13.5 11.8" stroke="#3d74b8" stroke-width="1.2"/>
</svg>
<div style="position:absolute;left:469.47px;top:69px;font-size:12.5px;line-height:12.5px;color:#444;font-weight:400;white-space:pre;transform:scaleX(0.9735);transform-origin:0 0;">Quebrar Texto Automaticamente</div>
<svg style="position:absolute;left:450px;top:96px;" width="18" height="17" viewBox="0 0 18 17">
<rect x="1.6" y="1.6" width="14.3" height="14" fill="#fff" stroke="#555" stroke-width="1.2"/>
<path d="M1.6 5H15.9M1.6 12.3H15.9M8.7 1.6V5M8.7 12.3V15.6" stroke="#555" stroke-width="1.1"/>
<path d="M4 8.6H13.5" stroke="#3d74b8" stroke-width="1.1"/>
<path d="M3 8.6L5.2 6.8V10.4Z M14.5 8.6L12.3 6.8V10.4Z" fill="#3d74b8"/>
</svg>
<div style="position:absolute;left:469.90px;top:100px;font-size:12.5px;line-height:12.5px;color:#444;font-weight:400;white-space:pre;transform:scaleX(0.9298);transform-origin:0 0;">Mesclar e Centralizar</div>
<svg style="position:absolute;left:589.0px;top:104px" width="5" height="3" viewBox="0 0 5 3"><path d="M0 0H5L2.5 3Z" fill="#555"/></svg>
<svg style="position:absolute;left:96px;top:132px;" width="8" height="8" viewBox="0 0 8 8"><path d="M0.5 6.5V0.5H6.5" fill="none" stroke="#777" stroke-width="1"/><path d="M2.5 2.5L6.5 6.5" stroke="#555" stroke-width="1.1"/><path d="M7.5 3.5V7.5H3.5Z" fill="#555"/></svg>
<svg style="position:absolute;left:303px;top:132px;" width="8" height="8" viewBox="0 0 8 8"><path d="M0.5 6.5V0.5H6.5" fill="none" stroke="#777" stroke-width="1"/><path d="M2.5 2.5L6.5 6.5" stroke="#555" stroke-width="1.1"/><path d="M7.5 3.5V7.5H3.5Z" fill="#555"/></svg>
<svg style="position:absolute;left:642px;top:132px;" width="8" height="8" viewBox="0 0 8 8"><path d="M0.5 6.5V0.5H6.5" fill="none" stroke="#777" stroke-width="1"/><path d="M2.5 2.5L6.5 6.5" stroke="#555" stroke-width="1.1"/><path d="M7.5 3.5V7.5H3.5Z" fill="#555"/></svg>
<svg style="position:absolute;left:782px;top:132px;" width="8" height="8" viewBox="0 0 8 8"><path d="M0.5 6.5V0.5H6.5" fill="none" stroke="#777" stroke-width="1"/><path d="M2.5 2.5L6.5 6.5" stroke="#555" stroke-width="1.1"/><path d="M7.5 3.5V7.5H3.5Z" fill="#555"/></svg>
<div style="position:absolute;left:659px;top:63px;width:131px;height:23px;box-sizing:border-box;border:1px solid #ababab;background:#fff;"></div>
<div style="position:absolute;left:661.56px;top:69px;font-size:12.5px;line-height:12.5px;color:#222;font-weight:400;white-space:pre;transform:scaleX(0.9834);transform-origin:0 0;">Moeda</div>
<svg style="position:absolute;left:780.0px;top:74px" width="5" height="3" viewBox="0 0 5 3"><path d="M0 0H5L2.5 3Z" fill="#555"/></svg>
<svg style="position:absolute;left:661px;top:96px;" width="19" height="18" viewBox="0 0 19 18">
<rect x="1.8" y="1.8" width="14.5" height="7.8" fill="#fff" stroke="#3d74b8" stroke-width="1.6"/>
<path d="M1 1H4L1 4Z M17 1H14L17 4Z M1 10.4H4L1 7.4Z" fill="#3d74b8"/>
<circle cx="9" cy="5.7" r="2.3" fill="#3d74b8"/>
<ellipse cx="13.5" cy="9.3" rx="3.5" ry="1.4" fill="#e8c27a"/>
<ellipse cx="13.5" cy="11.6" rx="3.5" ry="1.2" fill="#e8c27a"/>
<ellipse cx="13.5" cy="13.6" rx="3.5" ry="1.1" fill="#e8c27a"/>
<ellipse cx="8" cy="12.5" rx="3.5" ry="1.4" fill="#e8c27a"/>
<ellipse cx="8" cy="14.8" rx="3.5" ry="1.2" fill="#e8c27a"/>
<ellipse cx="8" cy="16.6" rx="3.5" ry="1.1" fill="#e8c27a"/>
</svg>
<svg style="position:absolute;left:684.0px;top:104px" width="5" height="3" viewBox="0 0 5 3"><path d="M0 0H5L2.5 3Z" fill="#555"/></svg>
<div style="position:absolute;left:697.67px;top:98px;font-size:15px;line-height:15px;color:#444;font-weight:400;white-space:pre;transform:scaleX(1.0342);transform-origin:0 0;">%</div>
<div style="position:absolute;left:718.15px;top:100px;font-size:10px;line-height:10px;color:#444;font-weight:400;white-space:pre;transform:scaleX(0.9169);transform-origin:0 0;">000</div>
<div style="position:absolute;left:741px;top:94px;width:1px;height:21px;background:#e1e1e1;"></div>
<svg style="position:absolute;left:747px;top:96px;" width="20" height="17" viewBox="0 0 20 17">
<path d="M2 5.5H9" stroke="#3d74b8" stroke-width="1.4"/>
<path d="M1.5 5.5L5 2.5M1.5 5.5L5 8.5" stroke="#3d74b8" stroke-width="1.4" fill="none"/>
<text x="11.5" y="8.3" font-family="Liberation Sans" font-size="8.5" fill="#333">0</text>
<text x="3.5" y="15" font-family="Liberation Sans" font-size="8.5" fill="#333">,00</text>
</svg>
<svg style="position:absolute;left:769px;top:96px;" width="20" height="17" viewBox="0 0 20 17">
<text x="2.5" y="8.3" font-family="Liberation Sans" font-size="8.5" fill="#333">,00</text>
<path d="M2 12.5H9" stroke="#3d74b8" stroke-width="1.4"/>
<path d="M9.5 12.5L6 9.5M9.5 12.5L6 15.5" stroke="#3d74b8" stroke-width="1.4" fill="none"/>
<text x="8.5" y="15" font-family="Liberation Sans" font-size="8.5" fill="#333">,0</text>
</svg>
<svg style="position:absolute;left:822px;top:59px;" width="32" height="32" viewBox="0 0 32 32">
<path d="M1.5 1.5H29M1.5 7.3H29M1.5 13.3H29M1.5 19.3H15M1.5 25.5H10" stroke="#999" stroke-width="1"/>
<path d="M1.5 1.5V25.5M8.7 1.5V25.5M21.4 1.5V19M29 1.5V19" stroke="#999" stroke-width="1"/>
<rect x="9" y="1.8" width="6" height="5.2" fill="#e0623e"/>
<rect x="9" y="7.8" width="11" height="5.2" fill="#3d74b8"/>
<rect x="9" y="13.8" width="9" height="5.2" fill="#e0623e"/>
<rect x="9" y="19.8" width="4" height="5.4" fill="#3d74b8"/>
<path d="M1.5 1.5H29V19M1.5 1.5V25.5H13" fill="none" stroke="#888" stroke-width="1.1"/>
<rect x="15.5" y="18.5" width="15" height="12" fill="#fff" stroke="#555" stroke-width="1.1"/>
<path d="M19.5 23H26.5M19.5 26.3H26.5M25.3 20.5L20.8 28.8" stroke="#333" stroke-width="1.1"/>
</svg>
<div style="position:absolute;left:805.99px;top:95px;font-size:12.5px;line-height:12.5px;color:#444;font-weight:400;white-space:pre;transform:scaleX(0.9490);transform-origin:0 0;">Formatação</div>
<div style="position:absolute;left:800.65px;top:111px;font-size:12.5px;line-height:12.5px;color:#444;font-weight:400;white-space:pre;">Condicional</div>
<svg style="position:absolute;left:868.0px;top:116px" width="5" height="3" viewBox="0 0 5 3"><path d="M0 0H5L2.5 3Z" fill="#666"/></svg>
<svg style="position:absolute;left:904px;top:60px;" width="34" height="32" viewBox="0 0 34 32">
<rect x="2.2" y="2.2" width="24.5" height="20.4" fill="#fff"/>
<rect x="8.4" y="7.4" width="18.3" height="15.2" fill="#c2d5ea"/>
<path d="M2.2 7.4H26.7M2.2 12.6H26.7M2.2 17.8H26.7M8.4 2.2V22.6M14.8 2.2V22.6M21 2.2V22.6" stroke="#999" stroke-width="1"/>
<rect x="2.2" y="2.2" width="24.5" height="20.4" fill="none" stroke="#888" stroke-width="1.1"/>
<g transform="translate(6.5 4.5)">
<path d="M22 2.5L25.5 3.5L25 7.5L18.5 14L14.5 10Z" fill="#777"/>
<path d="M13.5 11L17.5 15L15.8 16.7L11.8 12.7Z" fill="#777"/>
<path d="M11.5 13Q16.5 14.5 15.5 19Q13.5 23.5 3 25.5Q5 18 8 15Q9.5 13.2 11.5 13Z" fill="#3d74b8" stroke="#fff" stroke-width="0.9"/>
<path d="M9.5 17.5Q12.2 16.8 12.5 19.5" stroke="#fff" stroke-width="1" fill="none"/>
</g></svg>
<div style="position:absolute;left:877.57px;top:95px;font-size:12.5px;line-height:12.5px;color:#444;font-weight:400;white-space:pre;transform:scaleX(0.9723);transform-origin:0 0;">Formatar como</div>
<div style="position:absolute;left:898.30px;top:111px;font-size:12.5px;line-height:12.5px;color:#444;font-weight:400;white-space:pre;transform:scaleX(0.9282);transform-origin:0 0;">Tabela</div>
<svg style="position:absolute;left:935.0px;top:116px" width="5" height="3" viewBox="0 0 5 3"><path d="M0 0H5L2.5 3Z" fill="#666"/></svg>
<svg style="position:absolute;left:975px;top:58px;" width="34" height="32" viewBox="0 0 34 32">
<rect x="2.1" y="2.1" width="25.5" height="21.4" fill="#fff"/>
<rect x="7.4" y="7.2" width="13.8" height="10.2" fill="#c2d5ea"/>
<path d="M2.1 7.2H27.6M2.1 17.4H27.6M7.4 2.1V23.5M21.2 2.1V23.5" stroke="#999" stroke-width="1"/>
<rect x="2.1" y="2.1" width="25.5" height="21.4" fill="none" stroke="#888" stroke-width="1.1"/>
<g transform="translate(5.5 5)">
<path d="M22 2.5L25.5 3.5L25 7.5L18.5 14L14.5 10Z" fill="#777"/>
<path d="M13.5 11L17.5 15L15.8 16.7L11.8 12.7Z" fill="#777"/>
<path d="M11.5 13Q16.5 14.5 15.5 19Q13.5 23.5 3 25.5Q5 18 8 15Q9.5 13.2 11.5 13Z" fill="#3d74b8" stroke="#fff" stroke-width="0.9"/>
<path d="M9.5 17.5Q12.2 16.8 12.5 19.5" stroke="#fff" stroke-width="1" fill="none"/>
</g></svg>
<div style="position:absolute;left:964.91px;top:95px;font-size:12.5px;line-height:12.5px;color:#444;font-weight:400;white-space:pre;transform:scaleX(0.9151);transform-origin:0 0;">Estilos de</div>
<div style="position:absolute;left:968.88px;top:111px;font-size:12.5px;line-height:12.5px;color:#444;font-weight:400;white-space:pre;transform:scaleX(0.9566);transform-origin:0 0;">Célula</div>
<svg style="position:absolute;left:1005.0px;top:116px" width="5" height="3" viewBox="0 0 5 3"><path d="M0 0H5L2.5 3Z" fill="#666"/></svg>
<svg style="position:absolute;left:1032px;top:58px;" width="30" height="31" viewBox="0 0 30 31">
<rect x="2.1" y="2.3" width="14.6" height="5.2" fill="#fff" stroke="#777" stroke-width="1.1"/>
<path d="M9.4 2.3V7.5" stroke="#777" stroke-width="1.1"/>
<rect x="13.3" y="10.3" width="14.6" height="5.3" fill="#c2d5ea" stroke="#777" stroke-width="1.1"/>
<path d="M20.5 10.3V15.6" stroke="#777" stroke-width="1.1"/>
<path d="M4.5 13H10" stroke="#3d74b8" stroke-width="1.8"/>
<path d="M3 13L6.3 9.8V16.2Z" fill="#3d74b8"/>
<rect x="2.1" y="18.4" width="14.6" height="10.2" fill="#fff" stroke="#777" stroke-width="1.1"/>
<path d="M9.4 18.4V28.6M2.1 23.5H16.7" stroke="#777" stroke-width="1.1"/>
</svg>
<div style="position:absolute;left:1030.49px;top:95px;font-size:12.5px;line-height:12.5px;color:#444;font-weight:400;white-space:pre;transform:scaleX(0.9529);transform-origin:0 0;">Inserir</div>
<svg style="position:absolute;left:1044.0px;top:115px" width="5" height="3" viewBox="0 0 5 3"><path d="M0 0H5L2.5 3Z" fill="#666"/></svg>
<svg style="position:absolute;left:1073px;top:58px;" width="33" height="31" viewBox="0 0 33 31">
<rect x="2.3" y="2.3" width="14.5" height="5.2" fill="#fff" stroke="#777" stroke-width="1.1"/>
<path d="M9.5 2.3V7.5" stroke="#777" stroke-width="1.1"/>
<rect x="8.4" y="10.3" width="9" height="5.3" fill="#c2d5ea" stroke="#777" stroke-width="1.1"/>
<path d="M17.4 10.3L20 13L17.4 15.6Z" fill="#c2d5ea"/>
<rect x="2.3" y="19.5" width="14.5" height="10" fill="#fff" stroke="#777" stroke-width="1.1"/>
<path d="M9.5 19.5V29.5M2.3 24.5H16.8" stroke="#777" stroke-width="1.1"/>
<path d="M17.5 7.8L31 20.5M31.3 8.3L17.3 20.3" stroke="#dd5a36" stroke-width="2.4" stroke-linecap="round"/>
</svg>
<div style="position:absolute;left:1071.61px;top:95px;font-size:12.5px;line-height:12.5px;color:#444;font-weight:400;white-space:pre;transform:scaleX(0.9249);transform-origin:0 0;">Excluir</div>
<svg style="position:absolute;left:1086.0px;top:115px" width="5" height="3" viewBox="0 0 5 3"><path d="M0 0H5L2.5 3Z" fill="#666"/></svg>
<svg style="position:absolute;left:1120px;top:56px;" width="32" height="36" viewBox="0 0 32 36">
<path d="M2.7 5.5H24.1" stroke="#3d74b8" stroke-width="1.1"/>
<path d="M2.2 1.5V9.5M24.6 1.5V9.5" stroke="#3d74b8" stroke-width="1.1"/>
<path d="M3 5.5L6.5 3V8Z M23.8 5.5L20.3 3V8Z" fill="#3d74b8"/>
<rect x="10" y="14.5" width="7.8" height="9.5" fill="#3d74b8"/>
<path d="M2.2 9.2H29.6M2.2 14.5H29.6M2.2 24H29.6M10 9.2V29.8M17.8 9.2V29.8M24.4 9.2V29.8" stroke="#999" stroke-width="1"/>
<path d="M2.2 29.8V9.2H29.6V29.8" fill="none" stroke="#888" stroke-width="1.1"/>
<path d="M2.2 29.8V33.5H9L11 31.5H18L21 29.8H29.6" fill="none" stroke="#888" stroke-width="1"/>
</svg>
<div style="position:absolute;left:1111.58px;top:95px;font-size:12.5px;line-height:12.5px;color:#444;font-weight:400;white-space:pre;transform:scaleX(0.9644);transform-origin:0 0;">Formatar</div>
<svg style="position:absolute;left:1134.0px;top:115px" width="5" height="3" viewBox="0 0 5 3"><path d="M0 0H5L2.5 3Z" fill="#666"/></svg>
<div style="position:absolute;left:1172px;top:55px;width:22px;height:23px;box-sizing:border-box;border:1px solid #c8ebd6;background:#f7fcf9;"></div>
<div style="position:absolute;left:1193px;top:55px;width:14px;height:23px;background:#d3eedd;"></div>
<div style="position:absolute;left:1173.28px;top:56px;font-size:20px;line-height:20px;color:#444;font-weight:400;white-space:pre;transform:scaleX(1.4303);transform-origin:0 0;">Σ</div>
<svg style="position:absolute;left:1196.5px;top:65px" width="6" height="3" viewBox="0 0 6 3"><path d="M0 0H6L3.0 3Z" fill="#444"/></svg>
<svg style="position:absolute;left:1175px;top:80px;" width="16" height="18" viewBox="0 0 16 18">
<rect x="1.5" y="1.5" width="13" height="15" fill="#fff" stroke="#777" stroke-width="1"/>
<rect x="1" y="1" width="14" height="2" fill="#666"/>
<path d="M8 4.5V13" stroke="#3d74b8" stroke-width="1.8"/>
<path d="M4.3 9.8L8 13.6L11.7 9.8" stroke="#3d74b8" stroke-width="1.8" fill="none"/>
</svg>
<svg style="position:absolute;left:1195.0px;top:89px" width="5" height="3" viewBox="0 0 5 3"><path d="M0 0H5L2.5 3Z" fill="#666"/></svg>
<svg style="position:absolute;left:1175px;top:104px;" width="17" height="15" viewBox="0 0 17 15">
<path d="M9.5 1L14 5.5L7 12.5L2.5 8Z" fill="#e07a8c"/>
<path d="M2.5 8L7 12.5L5.5 14H2L0.8 12.8V9.7Z" fill="#f2b6c0"/>
<path d="M5 14H15" stroke="#555" stroke-width="1"/>
</svg>
<svg style="position:absolute;left:1195.0px;top:111px" width="5" height="3" viewBox="0 0 5 3"><path d="M0 0H5L2.5 3Z" fill="#666"/></svg>
<div style="position:absolute;left:1208.85px;top:94px;font-size:12.5px;line-height:12.5px;color:#444;font-weight:400;white-space:pre;">Cla</div>
<div style="position:absolute;left:1210.95px;top:111px;font-size:12.5px;line-height:12.5px;color:#444;font-weight:400;white-space:pre;">e l</div>
<svg style="position:absolute;left:1220px;top:66px;" width="3" height="22" viewBox="0 0 3 22"><path d="M0.5 7L2.5 2.5V7Z" fill="#3d74b8"/><rect x="1.5" y="8.5" width="2" height="1.5" fill="#8a5fb5"/><rect x="1.5" y="18.5" width="2" height="1.5" fill="#8a5fb5"/></svg>
</body></html>
